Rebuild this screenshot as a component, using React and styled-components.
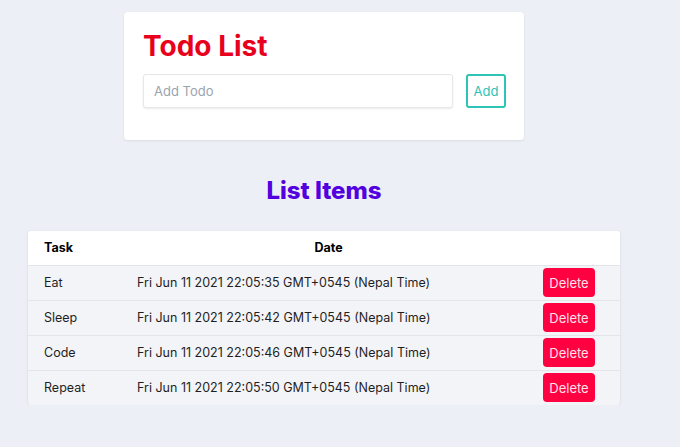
import React from "react";
import styled, { createGlobalStyle } from "styled-components";

const Global = createGlobalStyle`
  html, body { margin: 0; padding: 0; background: #eceff5; }
  body { font-family: Inter, "Noto Sans", sans-serif; color: #1f2937; }
  * { box-sizing: border-box; }
`;

const Page = styled.div`
  width: 648px;
  padding-top: 12px;
  display: flex;
  flex-direction: column;
  align-items: center;
`;

const Card = styled.div`
  width: 400px;
  background: #ffffff;
  border-radius: 4px;
  box-shadow: 0 1px 3px rgba(0, 0, 0, 0.08);
  padding: 17px 19px 32px;
`;

const Title = styled.h1`
  margin: 0 0 11px;
  font-size: 28px;
  font-weight: 700;
  line-height: 34px;
  color: #e8001d;
`;

const Form = styled.div`
  display: flex;
  align-items: center;
  gap: 13px;
`;

const Input = styled.input`
  flex: 0 0 310px;
  width: 310px;
  height: 34px;
  border: 1px solid #e5e7eb;
  border-radius: 3px;
  box-shadow: 0 1px 2px rgba(0, 0, 0, 0.08);
  padding: 0 10px;
  font-family: inherit;
  font-size: 13px;
  color: #374151;
  outline: none;
  &::placeholder { color: #9ca3af; }
`;

const AddButton = styled.button`
  flex: 0 0 40px;
  height: 34px;
  border: 2px solid #2ec4b6;
  border-radius: 3px;
  background: #ffffff;
  color: #2ec4b6;
  font-family: inherit;
  font-size: 13px;
  padding: 0;
`;

const Heading = styled.h2`
  margin: 36px 0 0;
  font-size: 24px;
  line-height: 30px;
  font-weight: 800;
  color: #5300e0;
`;

const Table = styled.table`
  margin-top: 25px;
  width: 592px;
  border-collapse: collapse;
  background: #f3f4f7;
  border-radius: 3px;
  overflow: hidden;
  box-shadow: 0 1px 3px rgba(0, 0, 0, 0.1);
  font-size: 12.5px;
`;

const HeadRow = styled.tr`
  background: #ffffff;
  height: 34px;
`;

const Th = styled.th`
  text-align: ${(p) => p.$align || "left"};
  padding: ${(p) => (p.$align === "center" ? "0 16px 0 25px" : "0 16px")};
  font-weight: 700;
  color: #000000;
  width: ${(p) => p.$w || "auto"};
`;

const Row = styled.tr`
  height: 35px;
  border-top: 1px solid #e3e5ea;
`;

const Td = styled.td`
  padding: 0 16px;
  color: #1f1f1f;
`;

const DeleteButton = styled.button`
  width: 52px;
  height: 29px;
  border: none;
  border-radius: 4px;
  background: #ff0040;
  color: #ffe3ea;
  font-family: inherit;
  font-size: 13px;
  padding: 0;
  vertical-align: middle;
`;

const items = [
  { task: "Eat", date: "Fri Jun 11 2021 22:05:35 GMT+0545 (Nepal Time)" },
  { task: "Sleep", date: "Fri Jun 11 2021 22:05:42 GMT+0545 (Nepal Time)" },
  { task: "Code", date: "Fri Jun 11 2021 22:05:46 GMT+0545 (Nepal Time)" },
  { task: "Repeat", date: "Fri Jun 11 2021 22:05:50 GMT+0545 (Nepal Time)" },
];

export default function App() {
  return (
    <Page>
      <Global />
      <Card>
        <Title>Todo List</Title>
        <Form>
          <Input placeholder="Add Todo" />
          <AddButton>Add</AddButton>
        </Form>
      </Card>
      <Heading>List Items</Heading>
      <Table>
        <thead>
          <HeadRow>
            <Th $w="93px">Task</Th>
            <Th $align="center" $w="406px">Date</Th>
            <Th $w="93px"></Th>
          </HeadRow>
        </thead>
        <tbody>
          {items.map((it) => (
            <Row key={it.task}>
              <Td>{it.task}</Td>
              <Td>{it.date}</Td>
              <Td>
                <DeleteButton>Delete</DeleteButton>
              </Td>
            </Row>
          ))}
        </tbody>
      </Table>
    </Page>
  );
}
